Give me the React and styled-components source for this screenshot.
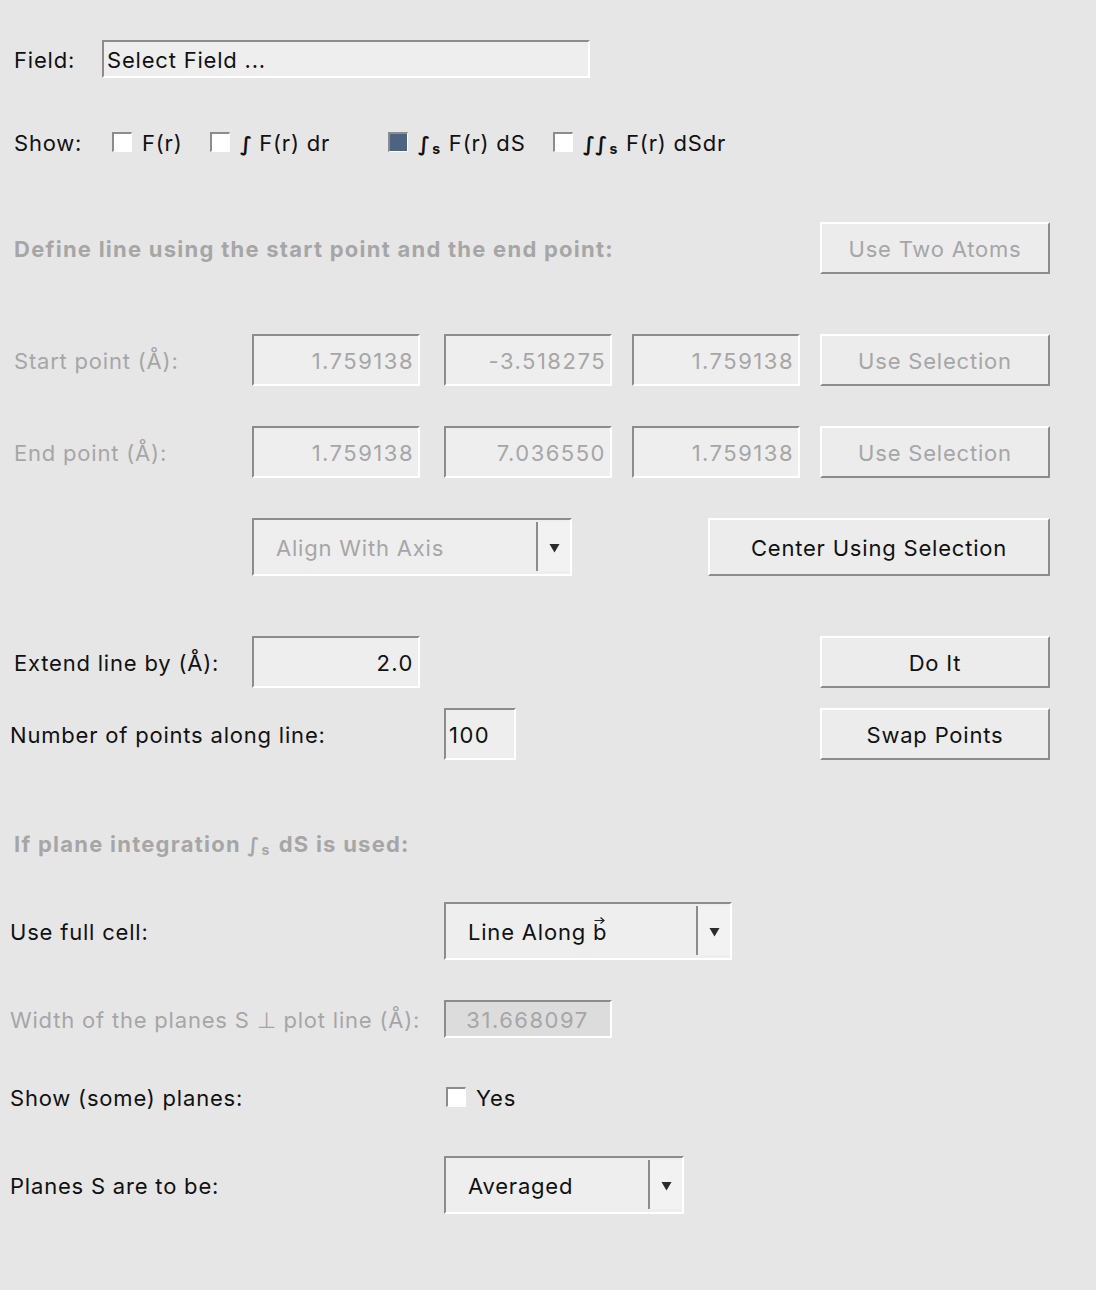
import React from "react";
import styled, { createGlobalStyle, css } from "styled-components";

const GlobalStyle = createGlobalStyle`
  html, body { margin: 0; padding: 0; background: #e6e6e6; }
  body {
    font-family: Inter, "Open Sans", "Liberation Sans", sans-serif;
    font-size: 22px;
    letter-spacing: 0.8px;
    color: #111;
  }
  * { box-sizing: border-box; }
`;

const GREY_TEXT = "#a6a6a6";

const Page = styled.div`
  width: 1096px;
  height: 1290px;
  padding-top: 40px;
  display: flex;
  flex-direction: column;
  overflow: hidden;
`;

const Row = styled.div`
  display: flex;
  align-items: center;
  height: ${(p) => p.$h}px;
  margin-top: ${(p) => p.$mt || 0}px;
  flex-shrink: 0;
`;

const Label = styled.div`
  width: ${(p) => p.$w}px;
  padding-left: ${(p) => (p.$pl == null ? 14 : p.$pl)}px;
  padding-top: 2px;
  color: ${(p) => (p.$disabled ? GREY_TEXT : "#111")};
  white-space: nowrap;
  flex-shrink: 0;
`;

const Heading = styled.div`
  width: ${(p) => p.$w || 820}px;
  padding-left: 14px;
  padding-top: 2px;
  color: ${GREY_TEXT};
  font-weight: 700;
  letter-spacing: 1.25px;
  white-space: nowrap;
  flex-shrink: 0;
`;

const inset = css`
  border-style: solid;
  border-width: 2px;
  border-color: #8c8c8c #ffffff #ffffff #8c8c8c;
`;

const outset = css`
  border-style: solid;
  border-width: 2px;
  border-color: #ffffff #8c8c8c #8c8c8c #ffffff;
`;

const TextField = styled.div`
  ${inset};
  width: ${(p) => p.$w}px;
  margin-left: ${(p) => p.$ml || 0}px;
  height: 100%;
  flex-shrink: 0;
  display: flex;
  align-items: center;
  justify-content: ${(p) => (p.$align === "left" ? "flex-start" : p.$align === "center" ? "center" : "flex-end")};
  padding: 2px 4px 0 3px;
  background: ${(p) => (p.$dim ? "#dcdcdc" : "#eeeeee")};
  color: ${(p) => (p.$disabled ? GREY_TEXT : "#111")};
  letter-spacing: ${(p) => (p.$num ? "1.5px" : "0.8px")};
  white-space: nowrap;
`;

const Button = styled.div`
  ${outset};
  width: ${(p) => p.$w}px;
  margin-left: ${(p) => p.$ml || 0}px;
  height: 100%;
  flex-shrink: 0;
  display: flex;
  align-items: center;
  justify-content: center;
  padding-top: 2px;
  background: #ececec;
  color: ${(p) => (p.$disabled ? GREY_TEXT : "#111")};
  white-space: nowrap;
`;

const Combo = styled.div`
  ${inset};
  width: ${(p) => p.$w}px;
  height: 100%;
  flex-shrink: 0;
  display: flex;
  align-items: stretch;
  background: #eeeeee;
  color: ${(p) => (p.$disabled ? GREY_TEXT : "#111")};
`;

const ComboText = styled.div`
  flex: 1;
  display: flex;
  align-items: center;
  padding: 2px 0 0 22px;
  white-space: nowrap;
`;

const ComboArrow = styled.div`
  width: 34px;
  margin: 2px 0 3px;
  border-left: 2px solid #8c8c8c;
  background: #f2f2f2;
  display: flex;
  align-items: center;
  justify-content: center;
  padding-top: 3px;
`;

const Box = styled.span`
  display: inline-block;
  width: 20px;
  height: 20px;
  border-style: solid;
  border-width: 2px 1px 1px 2px;
  border-color: #8c8c8c #ffffff #ffffff #8c8c8c;
  background: ${(p) => (p.$checked ? "#4e6282" : "#ffffff")};
  flex-shrink: 0;
`;

const CheckItem = styled.div`
  display: flex;
  align-items: center;
  gap: 10px;
  width: ${(p) => (p.$w ? `${p.$w}px` : "auto")};
  margin-left: ${(p) => p.$ml || 0}px;
  white-space: nowrap;
  flex-shrink: 0;
`;

const CheckText = styled.span`
  padding-top: 2px;
`;

const Sub = styled.span`
  font-size: 14px;
  font-weight: 700;
  margin: 0 8px 0 2px;
  position: relative;
  top: 3px;
`;

const Integral = styled.span`
  font-family: "DejaVu Sans", sans-serif;
  font-size: 20px;
  font-weight: 700;
  letter-spacing: 0;
`;

const VecWrap = styled.span`
  position: relative;
  display: inline-block;
`;

const VecArrow = styled.svg`
  position: absolute;
  left: 1px;
  top: -3px;
`;

function DownTriangle() {
  return (
    <svg width="11" height="10" viewBox="0 0 11 10">
      <path d="M0.5 1 L10.5 1 L5.5 9.5 Z" fill="#2b2b2b" />
    </svg>
  );
}

function Vec({ children }) {
  return (
    <VecWrap>
      {children}
      <VecArrow width="11" height="8" viewBox="0 0 11 8">
        <path d="M0.5 4.5 L10 4.5 M6.5 1.5 L10 4.5 L6.5 7.5" fill="none" stroke="#222" strokeWidth="1.2" />
      </VecArrow>
    </VecWrap>
  );
}

function ComboBox({ w, disabled, children }) {
  return (
    <Combo $w={w} $disabled={disabled}>
      <ComboText>{children}</ComboText>
      <ComboArrow>
        <DownTriangle />
      </ComboArrow>
    </Combo>
  );
}

function Check({ checked, w, ml, children }) {
  return (
    <CheckItem $w={w} $ml={ml}>
      <Box $checked={checked} />
      <CheckText>{children}</CheckText>
    </CheckItem>
  );
}

export default function App() {
  return (
    <>
      <GlobalStyle />
      <Page>
        <Row $h={38}>
          <Label $w={102}>Field:</Label>
          <TextField $w={488} $align="left">Select Field ...</TextField>
        </Row>

        <Row $h={40} $mt={44}>
          <Label $w={112}>Show:</Label>
          <Check w={98}>F(r)</Check>
          <Check w={178}>
            <Integral>∫</Integral> F(r) dr
          </Check>
          <Check w={165} checked>
            <Integral>∫</Integral>
            <Sub>s</Sub>F(r) dS
          </Check>
          <Check>
            <Integral>∫∫</Integral>
            <Sub>s</Sub>F(r) dSdr
          </Check>
        </Row>

        <Row $h={52} $mt={60}>
          <Heading $w={820}>Define line using the start point and the end point:</Heading>
          <Button $w={230} $disabled>Use Two Atoms</Button>
        </Row>

        <Row $h={52} $mt={60}>
          <Label $w={252} $disabled>Start point (Å):</Label>
          <TextField $w={168} $num $disabled>1.759138</TextField>
          <TextField $w={168} $ml={24} $num $disabled>-3.518275</TextField>
          <TextField $w={168} $ml={20} $num $disabled>1.759138</TextField>
          <Button $w={230} $ml={20} $disabled>Use Selection</Button>
        </Row>

        <Row $h={52} $mt={40}>
          <Label $w={252} $disabled>End point (Å):</Label>
          <TextField $w={168} $num $disabled>1.759138</TextField>
          <TextField $w={168} $ml={24} $num $disabled>7.036550</TextField>
          <TextField $w={168} $ml={20} $num $disabled>1.759138</TextField>
          <Button $w={230} $ml={20} $disabled>Use Selection</Button>
        </Row>

        <Row $h={58} $mt={40}>
          <Label $w={252} />
          <ComboBox w={320} disabled>Align With Axis</ComboBox>
          <Button $w={342} $ml={136}>Center Using Selection</Button>
        </Row>

        <Row $h={52} $mt={60}>
          <Label $w={252}>Extend line by (Å):</Label>
          <TextField $w={168} $num>2.0</TextField>
          <Button $w={230} $ml={400}>Do It</Button>
        </Row>

        <Row $h={52} $mt={20}>
          <Label $w={444} $pl={10}>Number of points along line:</Label>
          <TextField $w={72} $align="left" $num>100</TextField>
          <Button $w={230} $ml={304}>Swap Points</Button>
        </Row>

        <Row $h={38} $mt={64}>
          <Heading $w={820}>
            If plane integration <Integral>∫</Integral>
            <Sub>s</Sub>dS is used:
          </Heading>
        </Row>

        <Row $h={58} $mt={40}>
          <Label $w={444} $pl={10}>Use full cell:</Label>
          <ComboBox w={288}>
            Line Along&nbsp;<Vec>b</Vec>
          </ComboBox>
        </Row>

        <Row $h={38} $mt={40}>
          <Label $w={444} $pl={10} $disabled>Width of the planes S ⊥ plot line (Å):</Label>
          <TextField $w={168} $align="center" $dim $num $disabled>31.668097</TextField>
        </Row>

        <Row $h={38} $mt={40}>
          <Label $w={444} $pl={10}>Show (some) planes:</Label>
          <Check ml={2}>Yes</Check>
        </Row>

        <Row $h={58} $mt={40}>
          <Label $w={444} $pl={10}>Planes S are to be:</Label>
          <ComboBox w={240}>Averaged</ComboBox>
        </Row>
      </Page>
    </>
  );
}
